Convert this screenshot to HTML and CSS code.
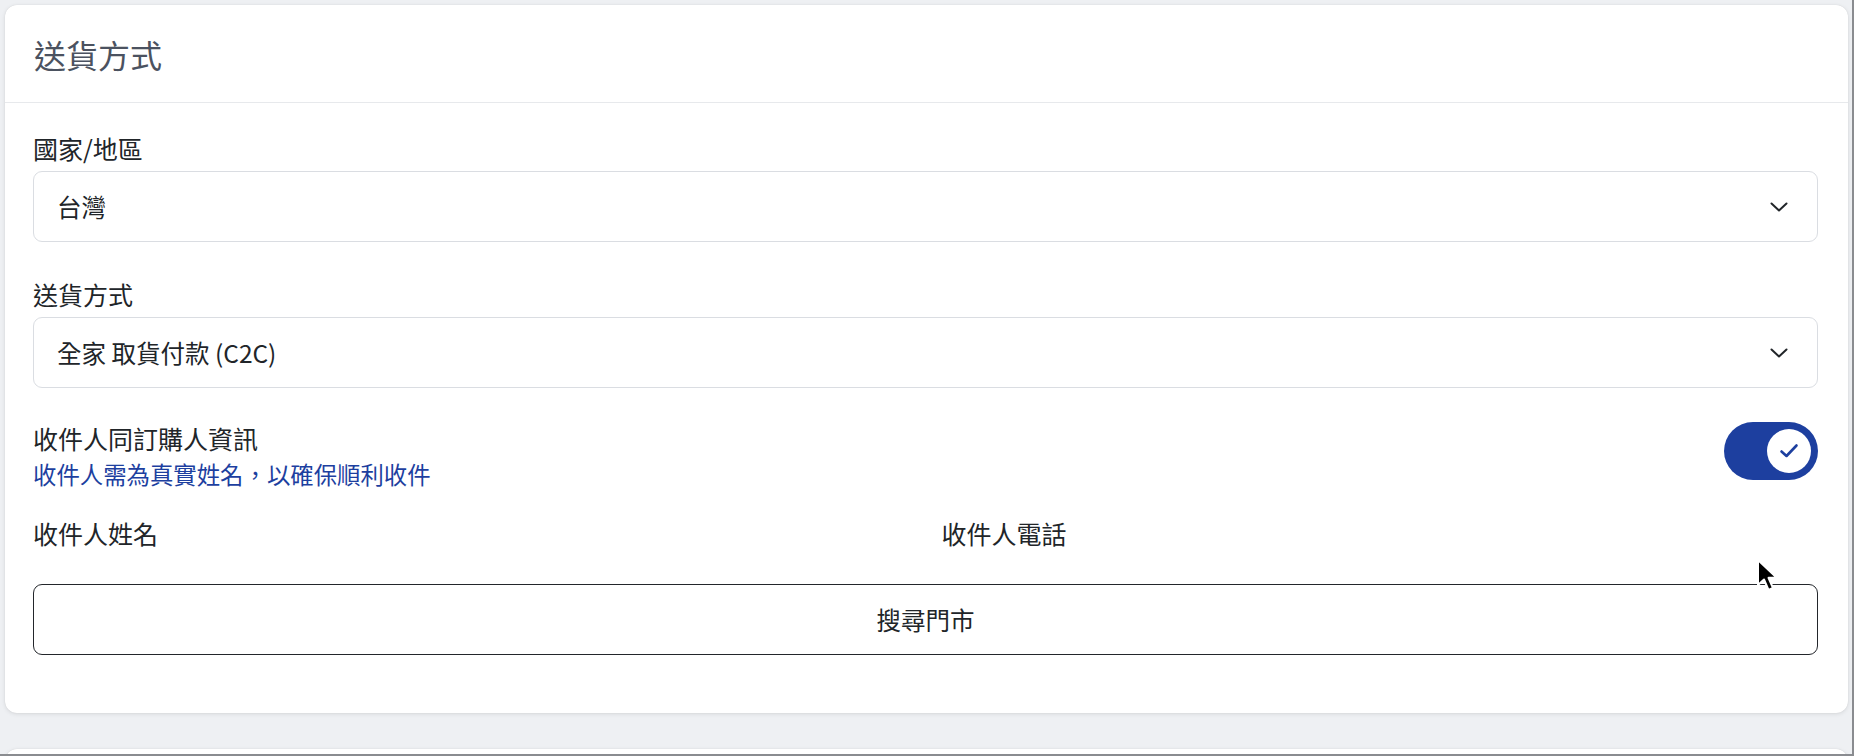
FILE: index.html
```html
<!DOCTYPE html>
<html lang="zh-Hant">
<head>
<meta charset="utf-8">
<title>送貨方式</title>
<link rel="stylesheet" href="styles.css">
</head>
<body>
<div class="page">
  <section class="card">
    <header class="card-header">
      <h2 class="card-title">送貨方式</h2>
    </header>
    <div class="card-body">
      <div class="field">
        <div class="label">國家/地區</div>
        <div class="select">
          <span class="select-value">台灣</span>
          <svg class="chevron" width="18" height="10" viewBox="0 0 18 10"><polyline points="1.5,1.5 9,8.5 16.5,1.5" fill="none" stroke="#212529" stroke-width="2" stroke-linecap="round" stroke-linejoin="round"/></svg>
        </div>
      </div>
      <div class="field">
        <div class="label">送貨方式</div>
        <div class="select">
          <span class="select-value">全家 取貨付款 (C2C)</span>
          <svg class="chevron" width="18" height="10" viewBox="0 0 18 10"><polyline points="1.5,1.5 9,8.5 16.5,1.5" fill="none" stroke="#212529" stroke-width="2" stroke-linecap="round" stroke-linejoin="round"/></svg>
        </div>
      </div>
      <div class="toggle-row">
        <div class="toggle-text">
          <div class="label">收件人同訂購人資訊</div>
          <div class="hint">收件人需為真實姓名，以確保順利收件</div>
        </div>
        <div class="switch">
          <div class="knob">
            <svg width="20" height="16" viewBox="0 0 20 16"><polyline points="2.5,8.5 7.5,13 17.5,2.5" fill="none" stroke="#1d3f9f" stroke-width="2.6" stroke-linecap="round" stroke-linejoin="round"/></svg>
          </div>
        </div>
      </div>
      <div class="name-row">
        <div class="label">收件人姓名</div>
        <div class="label">收件人電話</div>
      </div>
      <button class="store-btn" type="button">搜尋門市</button>
    </div>
  </section>
  <section class="card card-next"></section>
</div>
<svg class="cursor" width="26" height="36" viewBox="0 0 26 36"><path d="M2 2 L2 27 L8 21.5 L12.5 32 L17 30 L12.5 19.8 L20.5 19.5 Z" fill="#000" stroke="#fff" stroke-width="2" stroke-linejoin="round"/></svg>
<div class="frame"></div>
</body>
</html>
```

FILE: styles.css
```css
* { box-sizing: border-box; }
html, body {
  margin: 0;
  padding: 0;
  width: 1854px;
  height: 756px;
  overflow: hidden;
  background: #eef0f3;
  font-family: "Noto Sans CJK TC", "Noto Sans", sans-serif;
  color: #212529;
}
.page {
  padding: 5px 0 0 5px;
}
.card {
  width: 1843px;
  background: #fff;
  border-radius: 12px;
  box-shadow: 0 1px 4px rgba(0, 0, 0, 0.10), 0 0 1px rgba(0, 0, 0, 0.12);
}
.card-header {
  height: 98px;
  display: flex;
  align-items: center;
  padding-left: 29px;
  border-bottom: 1px solid #e7e9ec;
}
.card-title {
  margin: 0;
  font-size: 32px;
  font-weight: 400;
  color: #4b5260;
  line-height: 40px;
}
.card-body {
  padding: 27px 30px 58px 28px;
}
.label {
  font-size: 25px;
  line-height: 36px;
  color: #212529;
}
.field {
  margin-bottom: 34px;
}
.field .label {
  margin-bottom: 5px;
}
.select {
  height: 71px;
  border: 1px solid #dadde2;
  border-radius: 9px;
  display: flex;
  align-items: center;
  justify-content: space-between;
  padding: 0 29px 0 23px;
}
.select-value {
  font-size: 24.5px;
  line-height: 36px;
}
.chevron { display: block; }
.toggle-row {
  display: flex;
  justify-content: space-between;
  align-items: flex-start;
  margin-top: 2px;
}
.toggle-text .label {
  line-height: 32px;
}
.hint {
  margin-top: 4px;
  font-size: 23.4px;
  line-height: 32px;
  color: #1d3f9f;
}
.switch {
  width: 94px;
  height: 58px;
  border-radius: 29px;
  background: #1d3f9f;
  display: flex;
  align-items: center;
  justify-content: flex-end;
  padding-right: 7px;
}
.knob {
  width: 44px;
  height: 44px;
  border-radius: 50%;
  background: #fff;
  display: flex;
  align-items: center;
  justify-content: center;
}
.knob svg { display: block; }
.name-row {
  display: grid;
  grid-template-columns: 1fr 1fr;
  column-gap: 32px;
  margin-top: 25px;
}
.store-btn {
  display: block;
  width: 100%;
  height: 71px;
  margin-top: 33px;
  background: #fff;
  border: 1px solid #23262b;
  border-radius: 9px;
  font-family: inherit;
  font-size: 24.5px;
  color: #212529;
  cursor: pointer;
}
.card-next {
  margin-top: 36px;
  height: 40px;
}
.cursor {
  position: absolute;
  left: 1756px;
  top: 558px;
}
.frame {
  position: fixed;
  inset: 0;
  border-right: 2px solid #8a8c90;
  border-bottom: 2px solid #8a8c90;
  pointer-events: none;
}
```
